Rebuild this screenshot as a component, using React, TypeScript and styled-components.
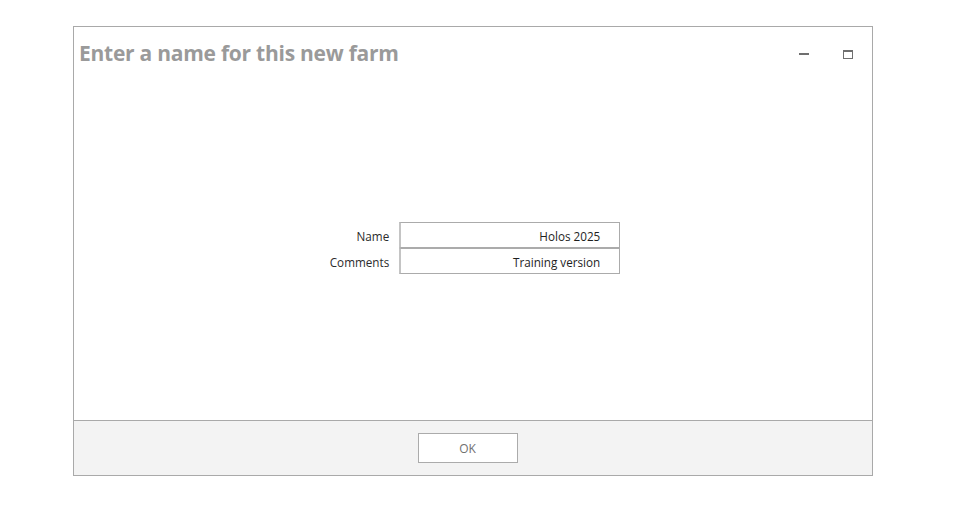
import React from "react";
import styled, { createGlobalStyle } from "styled-components";

const Global = createGlobalStyle`
  html, body { margin: 0; padding: 0; background: #ffffff; }
  body { font-family: "Open Sans", "Noto Sans", sans-serif; }
  * { box-sizing: border-box; }
`;

const Page = styled.div`
  padding: 26px 0 0 73px;
`;

const Dialog = styled.div`
  width: 800px;
  height: 450px;
  border: 1px solid #a9a9a9;
  display: flex;
  flex-direction: column;
  background: #ffffff;
`;

const Header = styled.div`
  display: flex;
  align-items: flex-start;
  justify-content: space-between;
  padding: 11px 19px 0 5px;
  height: 60px;
`;

const Title = styled.h1`
  margin: 0;
  font-family: "Open Sans", "Noto Sans", sans-serif;
  font-weight: 700;
  font-size: 21px;
  line-height: 30px;
  color: #9a9a9a;
  letter-spacing: -0.25px;
`;

const WindowButtons = styled.div`
  display: flex;
  align-items: center;
  gap: 34px;
  height: 10px;
  margin-top: 11px;
`;

const IconButton = styled.button`
  width: 10px;
  height: 10px;
  padding: 0;
  border: none;
  background: transparent;
  display: flex;
  align-items: center;
  justify-content: center;
`;

const Body = styled.div`
  flex: 1;
  display: flex;
  justify-content: center;
  padding: 135px 0 0 4px;
`;

const Form = styled.div`
  display: grid;
  grid-template-columns: auto 221px;
  column-gap: 10px;
  align-content: start;
`;

const Label = styled.label`
  font-family: "Open Sans", "Noto Sans", sans-serif;
  font-size: 11.7px;
  color: #2b2b2b;
  text-align: right;
  height: 26px;
  line-height: 28px;
`;

const Field = styled.div`
  height: 26px;
  border: 1px solid #ababab;
  border-left: 2px solid #c4c4c4;
  font-family: "Open Sans", "Noto Sans", sans-serif;
  font-size: 11.7px;
  color: #1e1e1e;
  text-align: right;
  line-height: 26px;
  padding-right: 19px;
  background: #ffffff;
`;

const Footer = styled.div`
  height: 55px;
  border-top: 1px solid #a9a9a9;
  background: #f3f3f3;
  display: flex;
  justify-content: center;
  padding: 12px 11px 0 0;
`;

const OkButton = styled.button`
  width: 100px;
  height: 30px;
  border: 1px solid #ababab;
  background: #ffffff;
  font-family: "Open Sans", "Noto Sans", sans-serif;
  font-size: 12px;
  color: #707070;
  padding: 0;
`;

export default function App() {
  return (
    <>
      <Global />
      <Page>
        <Dialog>
          <Header>
            <Title>Enter a name for this new farm</Title>
            <WindowButtons>
              <IconButton aria-label="Minimize">
                <svg width="10" height="2" viewBox="0 0 10 2">
                  <rect x="0" y="0" width="10" height="2" fill="#6f6f6f" />
                </svg>
              </IconButton>
              <IconButton aria-label="Maximize">
                <svg width="10" height="9" viewBox="0 0 10 9">
                  <rect x="0.5" y="0.5" width="9" height="8" fill="none" stroke="#6f6f6f" strokeWidth="1" />
                  <rect x="0" y="0" width="10" height="2" fill="#6f6f6f" />
                </svg>
              </IconButton>
            </WindowButtons>
          </Header>
          <Body>
            <Form>
              <Label>Name</Label>
              <Field>Holos 2025</Field>
              <Label>Comments</Label>
              <Field>Training version</Field>
            </Form>
          </Body>
          <Footer>
            <OkButton>OK</OkButton>
          </Footer>
        </Dialog>
      </Page>
    </>
  );
}
